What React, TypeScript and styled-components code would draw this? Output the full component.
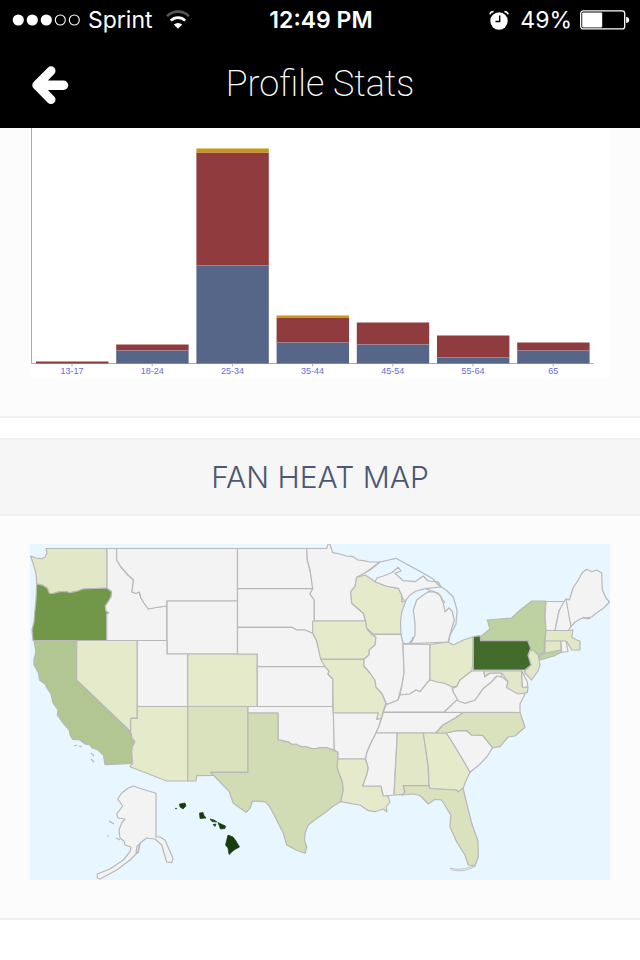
import React from "react";
import styled, { createGlobalStyle } from "styled-components";

const GlobalStyle = createGlobalStyle`
  body {
    margin: 0;
    background: #fff;
    font-family: "Liberation Sans", Arial, sans-serif;
  }
`;

const TopArea = styled.header`
  background: #000;
  color: #fff;
`;

const StatusBar = styled.div`
  display: grid;
  grid-template-columns: 1fr auto 1fr;
  align-items: center;
  height: 40px;
  padding: 0 10px 0 12px;
  font-family: Inter, "Liberation Sans", sans-serif;
  font-size: 23px;
`;

const StatusGroup = styled.div<{ $end?: boolean }>`
  display: flex;
  align-items: center;
  justify-content: ${(p) => (p.$end ? "flex-end" : "flex-start")};
  gap: 8px;
`;

const Clock = styled.time`
  font-weight: 600;
`;

const NavBar = styled.div`
  display: grid;
  grid-template-columns: 48px 1fr 48px;
  align-items: center;
  height: 88px;
  padding: 0 26px;
`;

const BackButton = styled.button`
  display: flex;
  align-items: center;
  justify-content: center;
  height: 48px;
  padding: 0;
  border: 0;
  background: none;
  color: inherit;
  cursor: pointer;
`;

const Title = styled.h1`
  margin: 0;
  font-family: Roboto, sans-serif;
  font-size: 36px;
  font-weight: 200;
  line-height: 40px;
  text-align: center;
`;

const Content = styled.main`
  display: flex;
  flex-direction: column;
  gap: 20px;
`;

const Panel = styled.section`
  border-bottom: 2px solid #f0f0f0;
  background: #fcfcfc;
`;

const PanelHeading = styled.h2`
  margin: 0;
  padding: 18px 0;
  border-top: 2px solid #f0f0f0;
  border-bottom: 2px solid #f0f0f0;
  background: #f6f6f6;
  color: #4d5675;
  font-family: Inter, "Liberation Sans", sans-serif;
  font-size: 30px;
  font-weight: 300;
  line-height: 38px;
  text-align: center;
`;

const PanelBody = styled.div<{ $top: number }>`
  padding: ${(p) => p.$top}px 30px 38px;
`;

const Drawing = styled.svg`
  display: block;
  width: 100%;
  height: auto;
`;

const AxisLabel = styled.text`
  fill: #6a6ad8;
  font-family: "Liberation Sans", Arial, sans-serif;
  font-size: 9px;
  text-anchor: middle;
`;

const SignalDots: React.FC = () => (
  <svg width="68" height="12" viewBox="0 0 68 12" role="img" aria-label="Signal">
    {[0, 1, 2, 3, 4].map((i) => (
      <circle
        key={i}
        cx={6.3 + i * 14}
        cy="6"
        r={i < 3 ? 5.6 : 5}
        fill={i < 3 ? "#fff" : "none"}
        stroke={i < 3 ? "none" : "#fff"}
        strokeWidth="1.1"
      />
    ))}
  </svg>
);

const WifiIcon: React.FC = () => (
  <svg width="30" height="20" viewBox="-4 0 30 20" role="img" aria-label="Wi-Fi">
    <g fill="none" strokeWidth="2.6">
      <path d="M2 6.2a15.6 15.6 0 0 1 22 0" stroke="#555" />
      <path d="M5.8 10.6a10.2 10.2 0 0 1 14.4 0" stroke="#fff" />
    </g>
    <path d="M13 18.8 8.8 14.6a6 6 0 0 1 8.4 0z" fill="#fff" />
  </svg>
);

const AlarmIcon: React.FC = () => (
  <svg width="24" height="20" viewBox="0 0 24 20" role="img" aria-label="Alarm">
    <circle cx="11" cy="11" r="8.7" fill="#fff" />
    <path d="M11.7 5.5v6H7.5" fill="none" stroke="#000" strokeWidth="1.4" />
    <path
      d="M1.8 4.4Q2.6 1.8 5.6 1.5M20.2 4.4Q19.4 1.8 16.4 1.5"
      fill="none"
      stroke="#fff"
      strokeWidth="1.5"
    />
  </svg>
);

const BatteryIcon: React.FC = () => (
  <svg width="50" height="20" viewBox="0 0 50 20" role="img" aria-label="Battery">
    <rect x="0.7" y="0.9" width="44" height="18" rx="2.5" fill="none" stroke="#fff" strokeWidth="1.3" />
    <rect x="2.2" y="2.4" width="20" height="15" rx="0.8" fill="#fff" />
    <path d="M46.2 6.8q3 .5 3 3.1t-3 3.1z" fill="#fff" />
  </svg>
);

const ArrowIcon: React.FC = () => (
  <svg width="38" height="42" viewBox="0 -2 38 42" aria-hidden="true">
    <g fill="none" stroke="#fff" strokeLinecap="round" strokeLinejoin="round">
      <path d="M20 5.8 5.8 20.2 20 34.6" strokeWidth="9" />
      <path d="M8 20.2h24.5" strokeWidth="9.4" />
    </g>
    <path d="M5 20.2 17.2 8v24.4z" fill="#fff" />
  </svg>
);

type AgeGroup = {
  label: string;
  men: number;
  women: number;
  other: number;
};

const ageGroups: AgeGroup[] = [
  { label: "13-17", men: 0, women: 2, other: 0 },
  { label: "18-24", men: 13, women: 6, other: 0 },
  { label: "25-34", men: 98, women: 113, other: 4 },
  { label: "35-44", men: 21, women: 25, other: 2 },
  { label: "45-54", men: 19, women: 22, other: 0 },
  { label: "55-64", men: 6, women: 22, other: 0 },
  { label: "65", men: 13, women: 8, other: 0 },
];

const BASELINE = 235.5;
const BAR_WIDTH = 72.4;

const AgeChart: React.FC = () => (
  <Drawing viewBox="0 0 580 250" role="img" aria-label="Fans by age">
    <rect width="580" height="250" fill="#fff" />
    <path d="M1.5 0v235.5h562" fill="none" stroke="#aaa" />
    {ageGroups.map(({ label, men, women, other }, i) => {
      const x = 6 + i * 80.2;
      return (
        <g key={label}>
          <rect x={x} y={BASELINE - men} width={BAR_WIDTH} height={men} fill="#566689" />
          <rect x={x} y={BASELINE - men - women} width={BAR_WIDTH} height={women} fill="#903b3d" />
          <rect
            x={x}
            y={BASELINE - men - women - other}
            width={BAR_WIDTH}
            height={other}
            fill="#c8960f"
          />
          {men > 0 && (
            <path d={`M${x} ${BASELINE - men}h${BAR_WIDTH}`} stroke="#a08c98" strokeWidth="0.7" />
          )}
          <path d={`M${x + 36} 235.5v3`} stroke="#aaa" />
          <AxisLabel x={x + 36} y="246">
            {label}
          </AxisLabel>
        </g>
      );
    })}
  </Drawing>
);

const NONE = "#f3f3f3";
const LOW = "#e5eacb";
const LIGHT = "#e2e7c7";
const SOFT = "#dae1bd";
const MID = "#d1dbb4";

// [state, fill, outline]
const states: [string, string, string][] = [
  ["WA", LIGHT, "46,548.5 107,548.5 107,588 83,589 78,591 70,592.7 66,591.5 60,591.7 53,593.5 49.3,593.3 47.3,588.3 42.7,585.3 36.7,584 36,573.3 33.3,564 30.7,556 36,558 41.7,558.7 45,557 47,553"],
  ["OR", "#719848", "36.7,584 42.7,585.3 47.3,588.3 49.3,593.3 53,593.5 60,591.7 66,591.5 70,592.7 78,591 83,589 107,588 111.7,591.7 111,597 108,602 105.3,606 106,611 108.7,612.7 106.7,614 106.7,640.5 33,640.5 32,630 34,622 34.7,613 36,600"],
  ["CA", "#b1c691", "34,640.5 76.7,640.5 76.7,680 130.7,731.7 132,738 135,741.7 132.5,746 131.7,752 132.5,763.3 105,764.7 103.3,755 98,750 91.7,747.7 90,745 85,744 80,740 72.7,739.3 70,735 69.3,730 63.3,723.3 57.3,715 58,710 53,703 51,694 47,688 45,684 39.5,680 38.5,673 34,665 34,659 36,652"],
  ["NV", LOW, "76.7,640.5 137.3,640.5 137.3,718.3 130.7,718.3 130.7,731.7 76.7,680"],
  ["ID", NONE, "107,548.5 116.5,548.5 116.7,560 121,567 128,575 133.5,580 132.7,586 132,592 136,593.5 139.3,592 141,598 144,603 148.3,609 156,607.5 166.7,606 166.7,640.5 106.7,640.5 106.7,614 108.7,612.7 106,611 105.3,606 108,602 111,597 111.7,591.7 107,588"],
  ["MT", NONE, "116.5,548.5 237.5,548.5 237.5,601 166.7,601 166.7,606 156,607.5 148.3,609 144,603 141,598 139.3,592 136,593.5 132,592 132.7,586 133.5,580 128,575 121,567 116.7,560"],
  ["WY", NONE, "167,601 237.5,601 237.5,654 167,654"],
  ["UT", NONE, "137.3,640.5 167,640.5 167,654 187.7,654 187.7,706.5 137.3,706.5"],
  ["CO", LOW, "187.7,654 257.3,654 257.3,706.5 187.7,706.5"],
  ["AZ", LOW, "137.3,706.5 187.7,706.5 187.7,781 166.7,781 130,766.7 132.5,763.3 131.7,752 132.5,746 135,741.7 132,738 130.7,731.7 130.7,718.3 137.3,718.3"],
  ["NM", SOFT, "187.7,706.5 248,706.5 248,772.3 210.7,772.3 213,775.5 196.7,775.7 196,781 187.7,781"],
  ["ND", NONE, "237.5,548.5 306.7,548.5 307.3,560 310,570 312,582 312.7,588.7 237.5,588.7"],
  ["SD", NONE, "237.5,588.7 312.7,588.7 310,594 314.3,600 314.3,620.7 312.7,633.3 305,630 296.7,630 291.7,627.3 237.5,627.3"],
  ["NE", NONE, "237.5,627.3 291.7,627.3 296.7,630 305,630 312.7,633.3 316.7,641 320.7,656.7 325,666.7 257.3,666.7 257.3,654 237.5,654"],
  ["KS", NONE, "257.3,666.7 325,666.7 329,671 328,674 332.7,679 332.7,706.5 257.3,706.5"],
  ["OK", NONE, "248,706.5 332.7,706.5 334.3,722 334.3,750 326.7,747.7 313.3,749 301.7,746.7 291.7,744.3 285,741 278,740 278,713 248,713"],
  ["TX", MID, "248,713 278,713 278,740 281,740 285,742 288,741.5 291.7,744.3 296,744 301.7,747 306,746.5 313.3,749 320,747.5 326.7,747.7 338,752.3 337.3,768.3 342.3,781.7 343.3,790 340.7,801.7 333.3,806 326,812 316,819 308.3,825 305,833.3 304.5,840 306.7,847 305,853.3 296,850 286.7,845 283.3,833.3 275,816.7 269.3,806 265,801.7 252.7,801 250,808.3 246,812.3 233.3,803.3 229.3,791.7 221,783 210.7,772.3 248,772.3"],
  ["MN", NONE, "306.7,548.5 326.7,548.5 328.3,544 330,544 332.7,552.7 340,554 346,556 353.3,556.7 358,560 363.3,560.7 370,562 380,562 370,570 356.7,577.3 355,586.7 350.7,591.7 351.7,603.3 363.3,613.3 365.7,621 314.3,621 314.3,600 310,594 312.7,588.7 310,570 307.3,560"],
  ["IA", LOW, "312.7,621 365.7,621 366.7,628.3 371,634 376,637.3 375,645 369.3,650 369,655 364,659.3 320.7,659.3 316.7,641 312.7,633"],
  ["MO", LOW, "320.7,659.3 364,659.3 364,666 370,673 375,680 376,687 382.3,694 386,703.3 383,712 381.7,718.3 376.7,719.5 378,713 333.3,713 332.7,679 328,674 329,671 325,666.7"],
  ["AR", NONE, "333.3,713 378,713 376.7,719.5 381.7,718.3 378.3,728 375,735 370,745 366.7,753 365.7,759 337.7,759 338,752.3 334.3,750"],
  ["LA", LOW, "337.7,759 365.7,759 368.3,768 366.7,775 362.7,786 381,786 382.7,794 388.3,796.7 390,802 386,807 387,812 383.3,809 375,811.7 368.3,810.7 360,805 350,803.3 340.7,801.7 343.3,790 342.3,781.7 337.3,768.3"],
  ["WI", LOW, "356.7,577.3 365,575 368.3,577 375,581.7 386,586 398.3,588.3 401.7,595 401.7,602 406,600.7 401.7,612 400.5,622 401,634.3 373.3,634.3 366.7,628.3 365.7,621 363.3,613.3 351.7,603.3 350.7,591.7 355,586.7"],
  ["IL", NONE, "373.3,634.3 401,634.3 403,643 404,673 402.3,683.3 399.3,695 398,700 388.3,704 386,703.3 382.3,694 376,687 375,680 370,673 364,666 364,659.3 369,655 369.3,650 375,645 376,637.3"],
  ["IN", NONE, "403,644 430,644.5 430,680 426.7,683.3 420,691.7 416,690 410,694 400,695 402.3,683.3 404,673"],
  ["MI", NONE, "411,643.7 448.3,642 450,635 454.3,620 452,611 449,608 445,611.7 443.3,603.3 440,595 434,592 428.3,591.7 423.3,595 416.7,600 413.3,610 415,623 415,635"],
  ["MI upper", NONE, "375,581.7 377,578 383.3,576 391.7,572.7 398.3,567.3 401,571 395,573.3 403.3,580.7 415,581.7 423.3,576 428,581 438.3,582 441,587 426.7,588.3 416,591 410,595 406,600 403,600 401.7,595 398.3,588.3 386,586"],
  ["OH", LOW, "430,644.5 448.3,642 453.3,645 463.3,640 473.3,636.7 472.7,665 471.7,671 466.7,675 460,680 456.7,686.7 451.7,686.7 445,683.5 436.7,682 430,680"],
  ["KY", NONE, "383.3,712 386,705 398,700 400,695 410,694 416,690 420,691.7 426.7,683.3 430,680 436.7,682 445,683.5 451.7,686.7 453.3,692 458.3,700 450,706.7 444,712"],
  ["TN", NONE, "383.3,712.5 463.3,712.5 455,718.3 443,725 435.7,733 376,733 378.3,728 381.7,718.3"],
  ["MS", NONE, "376,733 397.3,733 396.7,745 394,795 383.3,796 381,786 362.7,786 366.7,775 368.3,768 365.7,759 366.7,753 370,745"],
  ["AL", LIGHT, "397.3,733 423.3,733 428.3,766.7 429,785.7 403.3,785.7 405,794.3 394,795 396.7,745"],
  ["GA", LOW, "423.3,733 446,733 450,738.3 460,755 466,765 470,772.3 465,783 463,789 458,792 456.7,790 430,788.5 429,785.7 428.3,766.7"],
  ["FL", SOFT, "403.3,785.7 429,785.7 430,788.5 456.7,790 458,792 463,788 466.7,803.3 471.7,823.3 478,841 478.3,856.7 475,865.7 468.3,865 465,855 456.7,842 450,827 450.7,815 441.7,800 435,799.3 428.3,804 420,795.5 413.3,794 401.7,795 405,792"],
  ["SC", NONE, "446,733 456.7,730.7 466.7,730.7 471.7,735 482.7,735.3 492.7,747.7 486.7,757 479,765 470,772.3 466,765 460,755 450,738.3"],
  ["NC", SOFT, "463.3,712.5 520,712.5 525,727.3 515,736 508,737 500,746.7 492.7,747.7 482.7,735.3 471.7,735 466.7,730.7 456.7,730.7 446,733 435.7,733 443,725 455,718.3"],
  ["VA", NONE, "444,712.3 520,712.5 520,704 525,694 515,691.7 506.7,686.7 508,681.7 501.7,676.7 496.7,676 491.7,681.7 483.3,688.3 475,700 465,703.3 456.7,700"],
  ["WV", NONE, "452.7,688.3 456.7,686.7 460,680 471.7,671 484,671 484.7,676.7 490,673 501.7,673 501,677 496.7,676 491.7,681.7 483.3,688.3 475,700 465,703.3 458.3,701 453.3,692"],
  ["MD", LIGHT, "484,671 521.7,671 522.3,687 528,687 527.3,692.7 518,694 506.7,687.7 508,681.7 501.7,673 490,673 484.7,676.7"],
  ["DE", NONE, "521.7,671 527.3,681.7 527.7,687 522.3,687"],
  ["NY", "#bed1a1", "481.7,635.7 490,629 487.3,620 500,619 511.7,618 520,610 531.7,601 546,601 545,616 546,630 544.5,641.7 544.3,652 538,656 528,647 527.7,640.7 480.7,640.7"],
  ["Long Island", "#bed1a1", "539,657 544,653 561,649 566,650 554,656 540,660"],
  ["NJ", LIGHT, "529.3,651 533,650 538.3,655 540,665 538,671 531.7,680 524,672 531,665 528,657"],
  ["PA", "#426a2a", "473.3,636.7 480,635.7 480.7,640.7 527.7,640.7 530.7,648.3 528,655 531,665 525,670 473.3,670"],
  ["VT", NONE, "546,601.5 564,601.5 562,608 559,611 555,630.5 546,630.5 545,616"],
  ["NH", NONE, "564,601.5 566,599 569,601 571,626.7 568,630.5 555,630.5 559,611"],
  ["ME", NONE, "566,599 569.3,600 573,588 578.3,580 582,573 586.7,569.3 591.7,571.7 596.7,570 601.7,573 602.3,590 606,598 609.5,602 603.3,608.3 595,614 591.7,617 581.7,618.3 575,622 571,626.7"],
  ["MA", LIGHT, "546,630.5 568,630.5 573,630 571.7,637 576.7,640 580,641 580,650 571.7,650 566.7,641.5 545,641"],
  ["CT", LIGHT, "545,641 561,641 561,650 545,653"],
  ["RI", NONE, "561,641 566,641 568,651.5 561.7,652.5"],
  ["AK", NONE, "133.3,786 142,789 156,793.3 156,837 160,837 165,840 173,858.3 171.7,862.7 166.7,862 161.7,845 155,839 146.7,838 140,843 138,852 130,860 116.7,870 100,879 97.3,878 97.3,874 110,869 123.3,860 130,851.7 131,847 125,845 124,841 120,838 119,830 121.7,823 125,819 118,818 116.7,814 122.7,806 117.7,799 121.7,793 128.3,788"],
];

const hawaii = [
  "179.5,804 185,803 186,806 183,809 180,807",
  "199.5,813 203,812.5 204,815.5 206,818 200,818.5",
  "210,819 214,820 217,822 212,821.5",
  "213,824.5 216,824 215,826.5",
  "218,822.5 221,824 225.5,826 225,828.5 220.5,829",
  "228,835 233,837 236,841 239.5,847 234,850 229,854.5 228,848 225.5,845",
];

const HeatMap: React.FC = () => (
  <Drawing viewBox="30 544 580 336" role="img" aria-label="Fans by state">
    <rect x="30" y="544" width="580" height="336" fill="#e8f6ff" />
    <g stroke="#b8b8b8" strokeWidth="1.2" strokeLinejoin="round">
      {states.map(([name, fill, points]) => (
        <polygon key={name} points={points} fill={fill} />
      ))}
      <g fill="none">
        {/* Great Lakes border */}
        <path d="M365 573 380 562 396 558.3 410 566 423.3 573.3 433 579 438.3 585 446 590 453.3 597 457 610 456 624 450 635 448.3 642" />
        <path d="M403 643Q411 646 413 637M426 589l12 4 7 10" />
        <path d="M450 868q10 3 20-1l5-1q-10 7-23 4z" strokeWidth="0.8" />
        <path d="m74 746 3-1M79 746l3 1M91 753l3 3M91 759l3 3M109 821l5 3M107 836h2M116 838l4 2M136 853l1-7 3-2-2 9zM583 617l4 2 4-1" />
      </g>
    </g>
    <g fill="#183c10" stroke="#183c10" strokeWidth="0.7">
      {hawaii.map((points) => (
        <polygon key={points} points={points} />
      ))}
      <circle cx="176" cy="808.5" r="0.5" />
    </g>
  </Drawing>
);

const App: React.FC = () => (
  <>
    <GlobalStyle />
    <TopArea>
      <StatusBar>
        <StatusGroup>
          <SignalDots />
          <span>Sprint</span>
          <WifiIcon />
        </StatusGroup>
        <Clock>12:49 PM</Clock>
        <StatusGroup $end>
          <AlarmIcon />
          <span>49%</span>
          <BatteryIcon />
        </StatusGroup>
      </StatusBar>
      <NavBar>
        <BackButton type="button" aria-label="Back">
          <ArrowIcon />
        </BackButton>
        <Title>Profile Stats</Title>
      </NavBar>
    </TopArea>
    <Content>
      <Panel>
        <PanelBody $top={0}>
          <AgeChart />
        </PanelBody>
      </Panel>
      <Panel>
        <PanelHeading>FAN HEAT MAP</PanelHeading>
        <PanelBody $top={28}>
          <HeatMap />
        </PanelBody>
      </Panel>
    </Content>
  </>
);

export default App;
